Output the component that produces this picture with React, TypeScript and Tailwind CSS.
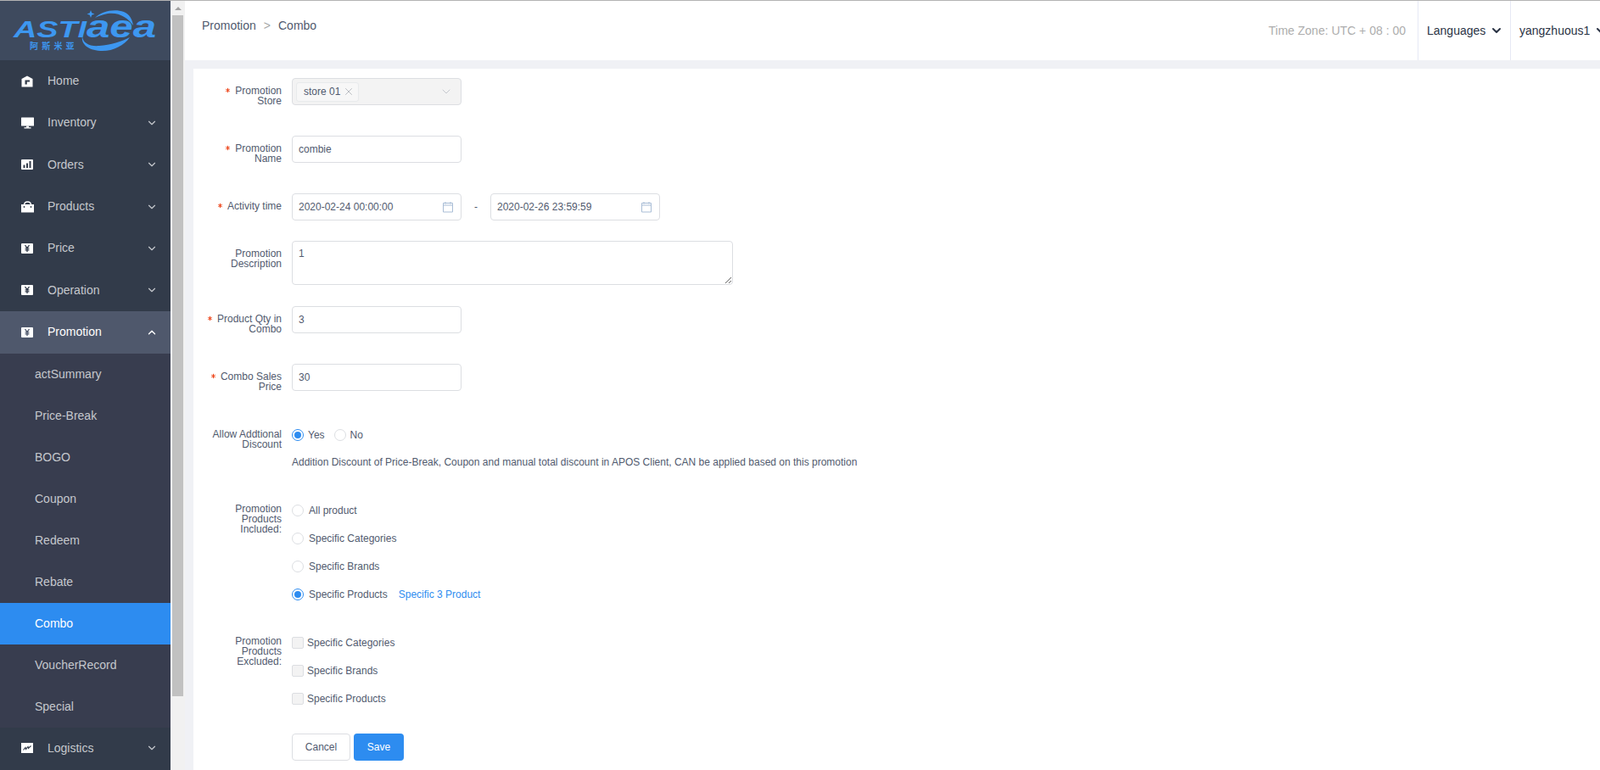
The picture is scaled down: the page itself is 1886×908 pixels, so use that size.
import React from 'react';
import { Asterisk, ChevronDown, ChevronUp, X } from 'lucide-react';

const HomeIcon = () => (
  <svg width="14" height="14" viewBox="0 0 14 14">
    <path d="M7 0.5 L13.5 4 V13.5 H0.5 V4 Z" fill="#fff" />
    <path d="M4.5 5.5 H10 V7.5 H6.8 V10.5 H4.5 Z" fill="#323b4a" />
  </svg>
);

const MonitorIcon = () => (
  <svg width="15" height="14" viewBox="0 0 15 14">
    <rect x="0" y="0.5" width="15" height="10" rx="0.5" fill="#fff" />
    <rect x="6" y="10.5" width="3" height="2" fill="#fff" />
    <rect x="3.5" y="12.2" width="8" height="1.3" fill="#fff" />
  </svg>
);

const ChartIcon = () => (
  <svg width="14" height="14" viewBox="0 0 14 14">
    <rect x="0" y="1" width="14" height="12" rx="1" fill="#fff" />
    <rect x="2.5" y="7.5" width="2" height="3.5" fill="#323b4a" />
    <rect x="6" y="5.5" width="2" height="5.5" fill="#323b4a" />
    <rect x="9.5" y="3" width="2" height="8" fill="#323b4a" />
  </svg>
);

const BagIcon = () => (
  <svg width="15" height="14" viewBox="0 0 15 14">
    <path d="M0 4 H15 V13.5 H0 Z" fill="#fff" />
    <path d="M3.5 6.5 V5 C3.5 2.4 5 1 7.5 1 C10 1 11.5 2.4 11.5 5 V6.5" fill="none" stroke="#fff" strokeWidth="1.4" />
    <circle cx="3.5" cy="7" r="0.9" fill="#323b4a" />
    <circle cx="11.5" cy="7" r="0.9" fill="#323b4a" />
  </svg>
);

const YenIcon = ({ dark = '#323b4a' }: { dark?: string }) => (
  <svg width="14" height="14" viewBox="0 0 14 14">
    <rect x="0" y="1" width="14" height="12" rx="1" fill="#fff" />
    <path d="M4.5 3.2 L7 6.4 L9.5 3.2 M7 6.4 V11 M4.6 6.8 H9.4 M4.6 8.8 H9.4" fill="none" stroke={dark} strokeWidth="1.3" />
  </svg>
);

const LogisticsIcon = () => (
  <svg width="14" height="14" viewBox="0 0 14 14">
    <rect x="0" y="1" width="14" height="12" fill="#fff" />
    <path d="M2.5 9.5 L5 6.5 L5.5 8.5 L8 5.5 L8.5 7.5 L11.5 4.5" fill="none" stroke="#323b4a" strokeWidth="1.1" />
  </svg>
);

const CalendarIcon = () => (
  <svg width="14" height="14" viewBox="0 0 14 14" className="absolute right-[9px] top-[9px]">
    <path d="M1.5 2.5 H12.5 V13 H1.5 Z M1.5 5 H12.5 M4 1 V3.5 M10 1 V3.5" fill="none" stroke="#a9bdd6" strokeWidth="1" />
  </svg>
);

const Logo = () => (
  <svg width="190" height="56" viewBox="0 0 190 56" className="block overflow-visible">
    <text x="16" y="32" fontFamily="Liberation Sans" fontWeight="700" fontStyle="italic" fontSize="27" textLength="86" lengthAdjust="spacingAndGlyphs" fill="#3d97f0">ASTI</text>
    <text x="102" y="32" fontFamily="Liberation Sans" fontWeight="700" fontStyle="italic" fontSize="36" textLength="82" lengthAdjust="spacingAndGlyphs" fill="#3d97f0">aea</text>
    <path d="M112 9 C120 1 135 -2 146 2 C153 5 156 11 157 18 C151 9 140 2 127 4 C121 5 116 7 112 9 Z" fill="#3d97f0" />
    <path d="M97 30 C97 39 106 43 117 42 C130 41 144 37 153 32 C146 42 132 49 118 48 C104 47 95 40 97 30 Z" fill="#3d97f0" />
    <path d="M107 0 L108.2 3.3 L111.5 4.5 L108.2 5.7 L107 9 L105.8 5.7 L102.5 4.5 L105.8 3.3 Z" fill="#3d97f0" />
    <text x="35" y="46" fontFamily="Noto Sans CJK SC" fontWeight="700" fontSize="10" letterSpacing="4.2" fill="#3d97f0">阿斯米亚</text>
  </svg>
);

const topItems = [
  { label: 'Home', icon: <HomeIcon /> },
  { label: 'Inventory', icon: <MonitorIcon />, arrow: true },
  { label: 'Orders', icon: <ChartIcon />, arrow: true },
  { label: 'Products', icon: <BagIcon />, arrow: true },
  { label: 'Price', icon: <YenIcon />, arrow: true },
  { label: 'Operation', icon: <YenIcon />, arrow: true },
];

const subItems = ['actSummary', 'Price-Break', 'BOGO', 'Coupon', 'Redeem', 'Rebate', 'Combo', 'VoucherRecord', 'Special'];

const MenuRow: React.FC<{ label: string; icon: React.ReactNode; arrow?: boolean }> = ({ label, icon, arrow }) => (
  <div className="h-[49.3px] flex items-center pl-[25px] pr-[15px] text-[14px] text-[#c5c8cd]">
    <span className="w-[15px] flex shrink-0">{icon}</span>
    <span className="ml-[16px]">{label}</span>
    {arrow && <ChevronDown size={14} strokeWidth={2} className="ml-auto text-[#c5c8cd]" />}
  </div>
);

const Sidebar = () => (
  <aside className="w-[201px] shrink-0 bg-[#323b4a] overflow-hidden">
    <div className="h-[70px] bg-[#3e4a5e] pt-[11px]">
      <Logo />
    </div>
    {topItems.map((item) => (
      <MenuRow key={item.label} {...item} />
    ))}
    <div className="h-[50px] bg-[#4f586c] flex items-center pl-[25px] pr-[15px] text-[14px] text-white">
      <span className="w-[15px] flex shrink-0"><YenIcon dark="#4f586c" /></span>
      <span className="ml-[16px]">Promotion</span>
      <ChevronUp size={14} strokeWidth={2.4} className="ml-auto text-white" />
    </div>
    <div className="bg-[#383d4f]">
      {subItems.map((name) => (
        <div
          key={name}
          className={`h-[49px] flex items-center pl-[41px] text-[14px] ${name === 'Combo' ? 'bg-[#2d8cf0] text-white' : 'text-[#c5c8cd]'}`}
        >
          {name}
        </div>
      ))}
    </div>
    <MenuRow label="Logistics" icon={<LogisticsIcon />} arrow />
  </aside>
);

const ScrollBar = () => (
  <div className="w-[17px] shrink-0 bg-[#f1f1f1] border-l-2 border-l-[#fafafa] pt-[7px] pr-[2px]">
    <div className="mx-auto w-0 h-0 border-x-[4px] border-x-transparent border-b-[4px] border-b-[#a3a3a3]" />
    <div className="h-[803px] mt-[6px] bg-[#c1c1c1]" />
  </div>
);

const Header = () => (
  <header className="h-[70px] shrink-0 bg-white flex items-stretch text-[14px] text-[#515a6e] overflow-hidden">
    <div className="pl-[20px] pt-[21px] leading-[16px]">
      <span>Promotion</span>
      <span className="text-[#a8a8a8] mx-[9px]">&gt;</span>
      <span>Combo</span>
    </div>
    <div className="ml-auto flex items-stretch">
      <div className="flex items-center pr-[14px] text-[#adadad]">Time Zone: UTC + 08 : 00</div>
      <div className="flex items-center border-l border-[#e6e9f5] pl-[10px] w-[109px] text-[#2b3445]">
        Languages
        <ChevronDown size={16} strokeWidth={3} className="ml-[5px]" />
      </div>
      <div className="flex items-center border-l border-[#e6e9f5] pl-[10px] w-[106px] text-[#2b3445] whitespace-nowrap">
        yangzhuous1
        <ChevronDown size={16} strokeWidth={3} className="ml-[5px] shrink-0" />
      </div>
    </div>
  </header>
);

const Star = () => <Asterisk size={9} strokeWidth={2.6} className="inline-block mr-[4px] align-[0px] text-[#ed4014]" />;

const FormRow: React.FC<{ label: React.ReactNode; className?: string; children: React.ReactNode }> = ({
  label,
  className = '',
  children,
}) => (
  <div className={`flex ${className}`}>
    <div className="w-[104px] h-[32px] shrink-0 text-right leading-[12px] pt-[9px]">{label}</div>
    <div className="ml-[12px] flex-1 min-w-0">{children}</div>
  </div>
);

const inputCls = 'h-[32px] w-[200px] rounded-[4px] border border-[#dcdee2] bg-white pl-[7px] text-[12px] text-[#515a6e] outline-none block';

const Radio: React.FC<{ on?: boolean }> = ({ on }) => (
  <span className={`w-[14px] h-[14px] rounded-full border bg-white flex items-center justify-center shrink-0 ${on ? 'border-[#2d8cf0]' : 'border-[#dcdee2]'}`}>
    {on && <span className="w-[8px] h-[8px] rounded-full bg-[#2d8cf0]" />}
  </span>
);

const RadioRow: React.FC<{ on?: boolean; text: string; children?: React.ReactNode }> = ({ on, text, children }) => (
  <div className="h-[33px] flex items-center">
    <Radio on={on} />
    <span className="ml-[6px]">{text}</span>
    {children}
  </div>
);

const CheckRow: React.FC<{ text: string }> = ({ text }) => (
  <div className="h-[33px] flex items-center">
    <span className="w-[14px] h-[14px] rounded-[2px] border border-[#dcdee2] bg-[#f3f3f3] shrink-0" />
    <span className="ml-[4px]">{text}</span>
  </div>
);

const DateInput: React.FC<{ value: string }> = ({ value }) => (
  <div className="relative w-[200px]">
    <input className={inputCls} defaultValue={value} readOnly />
    <CalendarIcon />
  </div>
);

const PromotionForm = () => (
  <main className="flex-1 ml-[10px] mt-[10px] bg-white pt-[11px] text-[12px] text-[#515a6e] overflow-hidden">
    <FormRow label={<><Star />Promotion<br />Store</>}>
      <div className="h-[32px] w-[200px] rounded-[4px] border border-[#dcdee2] bg-[#f3f3f3] flex items-center pl-[4px] pr-[9px]">
        <span className="h-[23px] w-[74px] rounded-[3px] border border-[#e8eaec] bg-[#f7f7f7] flex items-center pl-[8px]">
          store 01
          <X size={14} strokeWidth={1.1} className="ml-[3px] text-[#9a9ea6]" />
        </span>
        <ChevronDown size={16} strokeWidth={1.5} className="ml-auto text-[#c5c8ce]" />
      </div>
    </FormRow>

    <FormRow className="mt-[36px]" label={<><Star />Promotion<br />Name</>}>
      <input className={inputCls} defaultValue="combie" readOnly />
    </FormRow>

    <FormRow className="mt-[36px]" label={<><Star />Activity time</>}>
      <div className="flex items-center">
        <DateInput value="2020-02-24 00:00:00" />
        <span className="w-[34px] text-center">-</span>
        <DateInput value="2020-02-26 23:59:59" />
      </div>
    </FormRow>

    <FormRow className="mt-[24px]" label={<>Promotion<br />Description</>}>
      <textarea
        className="block h-[52px] w-[520px] rounded-[4px] border border-[#dcdee2] bg-white px-[7px] pt-[6px] text-[12px] leading-[16px] text-[#515a6e] outline-none"
        defaultValue="1"
        readOnly
      />
    </FormRow>

    <FormRow className="mt-[25px]" label={<><Star />Product Qty in<br />Combo</>}>
      <input className={inputCls} defaultValue="3" readOnly />
    </FormRow>

    <FormRow className="mt-[36px]" label={<><Star />Combo Sales<br />Price</>}>
      <input className={inputCls} defaultValue="30" readOnly />
    </FormRow>

    <FormRow className="mt-[36px]" label={<>Allow Addtional<br />Discount</>}>
      <div className="h-[32px] flex items-center">
        <Radio on />
        <span className="ml-[5px]">Yes</span>
        <span className="ml-[11px] flex"><Radio /></span>
        <span className="ml-[5px]">No</span>
      </div>
      <p className="leading-[32px]">
        Addition Discount of Price-Break, Coupon and manual total discount in APOS Client, CAN be applied based on this promotion
      </p>
    </FormRow>

    <FormRow className="mt-[24px]" label={<>Promotion<br />Products<br />Included:</>}>
      <RadioRow text="All product" />
      <RadioRow text="Specific Categories" />
      <RadioRow text="Specific Brands" />
      <RadioRow on text="Specific Products">
        <span className="ml-[13px] text-[#2d8cf0]">Specific 3 Product</span>
      </RadioRow>
    </FormRow>

    <FormRow className="mt-[24px]" label={<>Promotion<br />Products<br />Excluded:</>}>
      <CheckRow text="Specific Categories" />
      <CheckRow text="Specific Brands" />
      <CheckRow text="Specific Products" />
    </FormRow>

    <FormRow className="mt-[25px]" label={null}>
      <div className="flex">
        <button className="h-[32px] w-[69px] rounded-[4px] border border-[#dcdee2] bg-white text-[12px] text-[#515a6e]">Cancel</button>
        <button className="h-[32px] w-[59px] ml-[4px] rounded-[4px] bg-[#2d8cf0] text-[12px] text-white">Save</button>
      </div>
    </FormRow>
  </main>
);

export default function App() {
  return (
    <div className="h-screen flex flex-col overflow-hidden font-['Liberation_Sans',Arial,sans-serif]">
      <div className="h-px shrink-0 bg-[#b3b3b3]" />
      <div className="flex-1 flex min-h-0">
        <Sidebar />
        <ScrollBar />
        <div className="flex-1 min-w-0 flex flex-col bg-[#f0f1f5]">
          <Header />
          <PromotionForm />
        </div>
      </div>
    </div>
  );
}
